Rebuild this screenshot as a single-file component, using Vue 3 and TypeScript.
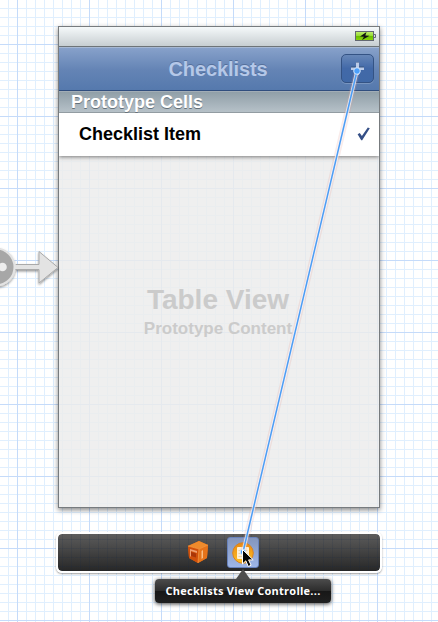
<script setup lang="ts">
const sceneTitle: string = 'Checklists'
const sectionTitle: string = 'Prototype Cells'
const cells: string[] = ['Checklist Item']
const tooltip: string = 'Checklists View Controlle...'
</script>

<template>
  <main class="canvas">
    <section class="scene">
      <div class="status">
        <svg class="battery" width="22" height="12" viewBox="0 0 22 12">
          <defs>
            <linearGradient id="charge" x1="0" y1="0" x2="0" y2="1">
              <stop offset="0" stop-color="#c2ef73" />
              <stop offset=".45" stop-color="#98dd35" />
              <stop offset=".5" stop-color="#68bd00" />
              <stop offset="1" stop-color="#8bd70b" />
            </linearGradient>
          </defs>
          <rect x=".5" y="1.5" width="18" height="9" fill="url(#charge)" stroke="#626771" />
          <path d="M19 4.5h1.5v3H19" fill="#dce1e3" stroke="#626771" />
          <path d="M11.500 2 5 6.500l4 .3L7 10 14.500 5.800l-4.200-.4z" fill="#111" />
        </svg>
      </div>
      <header class="nav">
        <h1>{{ sceneTitle }}</h1>
        <button class="add" aria-label="Add">
          <svg width="13" height="13" viewBox="0 0 13 13">
            <path d="M5 0h3v5h5v3H8v5H5V8H0V5h5z" fill="#bccbe7" />
            <path d="M5 0h3M0 5h5M8 5h5" stroke="#36547f" />
          </svg>
        </button>
      </header>
      <h2 class="section-title">{{ sectionTitle }}</h2>
      <div v-for="cell in cells" :key="cell" class="cell">
        <span>{{ cell }}</span>
        <svg width="13" height="14" viewBox="0 0 13 14">
          <path d="M.6 7.200 2.800 6 4.900 9 10.800.500 12.800 1.300 5.200 13.200 4.200 13.200z" fill="#344f86" />
        </svg>
      </div>
      <div class="placeholder">
        <strong>Table View</strong>
        <span>Prototype Content</span>
      </div>
    </section>

    <footer class="dock">
      <svg class="cube" width="22" height="24" viewBox="0 0 22 24">
        <path d="M1 6 12 1l9 4-1 13-9 5-9-5z" fill="#db610d" />
        <path d="M1 6 12 1l9 4-9 4z" fill="#ee8b2c" />
        <path d="m1 6 11 3-1 14-9-5z" fill="#cf500b" />
        <path d="m12 9 9-4-1 13-9 5z" fill="#e5731a" />
        <path d="m3 9 7 2v2l-6-2v6l-1-1z" fill="#efa071" />
        <path d="m4 12 5 1.500v4L4 16z" fill="#a93608" />
        <path d="m14.500 11 1.500-1v8l-1.500 1z" fill="#f8bd85" />
        <path d="m1 6 11 3 9-4M12 9l-1 14" fill="none" stroke="#f39b48" stroke-width=".7" />
      </svg>
      <div class="selected">
        <svg width="24" height="24" viewBox="0 0 24 24">
          <defs>
            <linearGradient id="orb" x1="0" y1="0" x2="0" y2="1">
              <stop offset="0" stop-color="#e98810" />
              <stop offset="1" stop-color="#ffc126" />
            </linearGradient>
          </defs>
          <circle cx="12" cy="12" r="10.3" fill="url(#orb)" stroke="#d78224" />
          <rect x="6" y="6" width="12" height="12" rx="1" fill="#fff0d4" />
          <path d="M7.500 9.500h9M7.500 12.500h9M7.500 15.500h9" stroke="#e8d1ae" />
        </svg>
      </div>
    </footer>

    <svg class="overlay" width="438" height="622" viewBox="0 0 438 622">
      <defs>
        <filter id="soft" x="-30%" y="-30%" width="160%" height="170%">
          <feDropShadow dx="0" dy="1.5" stdDeviation="1.3" flood-opacity=".4" />
        </filter>
      </defs>
      <g filter="url(#soft)">
        <circle cx="-4" cy="267" r="18.5" fill="#a7a7a7" stroke="#e3e3e3" stroke-width="2" />
        <circle cx="2.5" cy="267" r="4.3" fill="#ededed" />
        <path d="M16 264.5h23v-13l19 16-19 15.500v-13.500H16z" fill="#e3e3e3" stroke="#aaa" />
        <path d="M15 267h24.500" stroke="#e3e3e3" stroke-width="4" />
      </g>
      <path d="M357 71 243 552" stroke="#e59b91" stroke-opacity=".2" stroke-width="6" />
      <path d="M357 71 243 552" stroke="#f5f7fc" stroke-opacity=".75" stroke-width="3.4" />
      <path d="M357 71 243 552" stroke="#4c9df5" stroke-width="1.5" />
      <circle cx="243" cy="552" r="2.800" fill="#4ca0fb" stroke="#d3e4fb" />
      <circle cx="357" cy="71" r="3.3" fill="#4ca0fb" stroke="#d3e4fb" stroke-width="1" />
      <path d="M242.500 549.500v14.500l3.300-3.200 2.500 5.700 2.800-1.300-2.500-5.300h4.600z" fill="#050505" stroke="#fff" />
    </svg>
    <div class="tooltip">{{ tooltip }}</div>
  </main>
</template>

<style>
body {
  margin: 0;
}
</style>

<style scoped>
* {
  box-sizing: border-box;
}

.canvas {
  position: relative;
  width: 438px;
  height: 622px;
  padding: 26px 58px 0;
  overflow: hidden;
  font-family: "Liberation Sans", Arial, sans-serif;
  background-color: #fff;
  background-image:
    linear-gradient(90deg, #c5dbfa 1px, transparent 1px),
    linear-gradient(#c5dbfa 1px, transparent 1px),
    linear-gradient(90deg, #e0effe 1px, transparent 1px),
    linear-gradient(#e0effe 1px, transparent 1px);
  background-size: 72px 72px, 72px 72px, 9px 9px, 9px 9px;
  background-position: 17px 0, 0 44px, 8px 0, 0 8px;
}

.scene {
  display: flex;
  flex-direction: column;
  width: 322px;
  height: 482px;
  border: 1px solid #777b7e;
  background: rgb(236 236 236 / 83%);
  box-shadow: 0 2px 5px rgb(0 0 0 / 48%);
}

.status {
  display: flex;
  flex: 0 0 20px;
  justify-content: flex-end;
  padding: 3px 2px 0 0;
  border-bottom: 1px solid #6d7478;
  background: linear-gradient(#f5f9fa, #c7ced1);
}

.nav {
  position: relative;
  display: flex;
  flex: 0 0 44px;
  align-items: center;
  justify-content: center;
  border-top: 1px solid #a6b8d3;
  border-bottom: 1px solid #304e7e;
  background: linear-gradient(#87a1ca, #6484b5 52%, #5579ad);
}

h1 {
  margin: -1px 0 0 -2px;
  color: #b5c8e8;
  font-size: 20px;
  line-height: 24px;
  letter-spacing: -.1px;
  text-shadow: 0 -1px #56709b;
}

.add {
  position: absolute;
  top: 6px;
  right: 5px;
  display: flex;
  align-items: center;
  justify-content: center;
  width: 33px;
  height: 29px;
  padding: 0;
  border: 1px solid #345384;
  border-radius: 5px;
  background: linear-gradient(#6787b8, #4269a8 50%, #4069a7);
  box-shadow: 0 1px #7895bf;
}

.add svg {
  margin-top: -1px;
}

.section-title {
  flex: 0 0 22px;
  margin: 0;
  padding-left: 12px;
  border-top: 1px solid #a2adb6;
  border-bottom: 1px solid #929ca2;
  background: linear-gradient(#909fa8, #b6c1c8);
  color: #fff;
  font-size: 18px;
  line-height: 20px;
  text-shadow: 0 1px #65717a;
}

.cell {
  display: flex;
  flex: 0 0 43px;
  align-items: center;
  justify-content: space-between;
  padding: 0 9px 0 20px;
  background: #fff;
  box-shadow: 0 1px 4px rgb(0 0 0 / 50%);
  clip-path: inset(0 0 -8px);
  color: #000;
  font-size: 18px;
  font-weight: bold;
}

.cell svg {
  margin-top: -2px;
}

.placeholder {
  display: flex;
  flex: 1;
  flex-direction: column;
  align-items: center;
  padding: 128px 2px 0 0;
  color: #cbcbcb;
}

.placeholder strong {
  font-size: 28px;
  line-height: 32px;
}

.placeholder span {
  margin-top: 3px;
  font-size: 17px;
  font-weight: bold;
  line-height: 20px;
}

.dock {
  display: flex;
  align-items: center;
  justify-content: center;
  gap: 18px;
  width: 326px;
  height: 41px;
  margin: 24px 0 0 -2px;
  border: 2px solid #fff;
  border-radius: 6px;
  background:
    linear-gradient(90deg, rgb(20 40 70 / 13%) 1px, transparent 1px) 4px 0 / 9px 9px padding-box,
    linear-gradient(rgb(20 40 70 / 13%) 1px, transparent 1px) 0 5px / 9px 9px padding-box,
    linear-gradient(#5c5c5c, #272727) padding-box;
  box-shadow: 0 1px 2px rgb(0 0 0 / 38%);
}

.cube {
  margin: -1px 0 0 8px;
}

.selected {
  display: flex;
  align-items: center;
  justify-content: center;
  width: 32px;
  height: 31px;
  border: 1px solid #6882bb;
  border-radius: 3px;
  background: linear-gradient(#8496bd, #9eb6e7);
}

.overlay {
  position: absolute;
  inset: 0;
  pointer-events: none;
}

.tooltip {
  position: absolute;
  top: 579px;
  left: 155px;
  width: 176px;
  height: 24px;
  border-radius: 4px;
  background: linear-gradient(#4c4c4c, #2d2d2d 48%, #171717 50%, #202020);
  box-shadow: 0 1px 4px rgb(0 0 0 / 75%);
  color: #fff;
  font-family: "Open Sans", sans-serif;
  font-size: 11px;
  font-weight: bold;
  letter-spacing: .25px;
  line-height: 23px;
  text-align: center;
  white-space: nowrap;
}

.tooltip::before {
  position: absolute;
  top: -10px;
  left: 81px;
  border: solid transparent;
  border-width: 0 7px 10px;
  border-bottom-color: #4e4e4e;
  content: "";
}
</style>
